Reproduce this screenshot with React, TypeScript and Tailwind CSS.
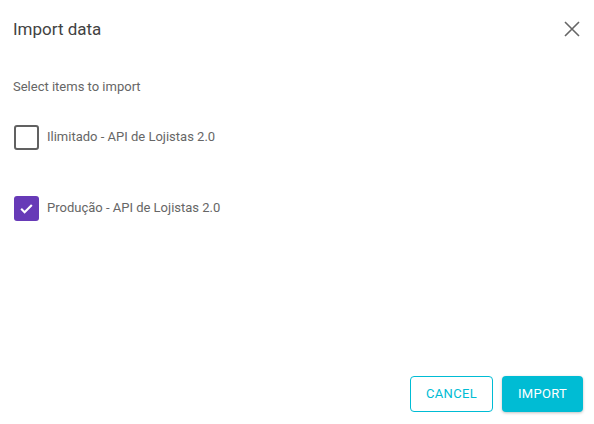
import { useState } from 'react';

const items = [
  { id: 'ilimitado', label: 'Ilimitado - API de Lojistas 2.0', checked: false },
  { id: 'producao', label: 'Produção - API de Lojistas 2.0', checked: true },
];

export default function App() {
  const [state, setState] = useState(items);

  const toggle = (id: string) =>
    setState(s => s.map(i => (i.id === id ? { ...i, checked: !i.checked } : i)));

  return (
    <div className="w-[594px] h-[424px] bg-white flex flex-col font-['Roboto',sans-serif]">
      <div className="flex items-center justify-between pl-[13px] pr-[10px] pt-[14px] h-[44px]">
        <h2 className="text-[17px] leading-[24px] text-[#424242]">Import data</h2>
        <button className="w-6 h-6 flex items-center justify-center text-[#666]">
          <svg width="24" height="24" viewBox="0 0 24 24" fill="none" stroke="currentColor" strokeWidth="1.6">
            <path d="M5 5l14 14M19 5L5 19" />
          </svg>
        </button>
      </div>

      <div className="flex-1 flex flex-col pl-[13px] pt-[35px]">
        <p className="text-[13px] leading-[16px] text-[#666]">Select items to import</p>
        <div className="flex flex-col gap-[45px] mt-[29px]">
          {state.map(item => (
            <label
              key={item.id}
              className="flex items-center gap-[8px] cursor-pointer h-[26px]"
              onClick={() => toggle(item.id)}
            >
              {item.checked ? (
                <span className="ml-[1px] w-[25px] h-[25px] rounded-[3px] bg-[#673ab7] flex items-center justify-center">
                  <svg width="17" height="17" viewBox="0 0 24 24" fill="none" stroke="white" strokeWidth="3">
                    <path d="M4.5 12.5l4.8 4.8L19.5 7" />
                  </svg>
                </span>
              ) : (
                <span className="ml-[1px] w-[25px] h-[25px] rounded-[3px] border-2 border-[#616161]" />
              )}
              <span className="text-[13px] text-[#666]">{item.label}</span>
            </label>
          ))}
        </div>
      </div>

      <div className="flex justify-end gap-[9px] pr-[11px] pb-[12px]">
        <button className="w-[83px] h-[36px] rounded-[4px] border border-[#00bcd4] text-[#00bcd4] text-[13px] tracking-[0.3px]">
          CANCEL
        </button>
        <button className="w-[81px] h-[36px] rounded-[4px] bg-[#00bcd4] text-white text-[13px] tracking-[0.3px] shadow-[0_1px_3px_rgba(0,0,0,0.25)]">
          IMPORT
        </button>
      </div>
    </div>
  );
}
